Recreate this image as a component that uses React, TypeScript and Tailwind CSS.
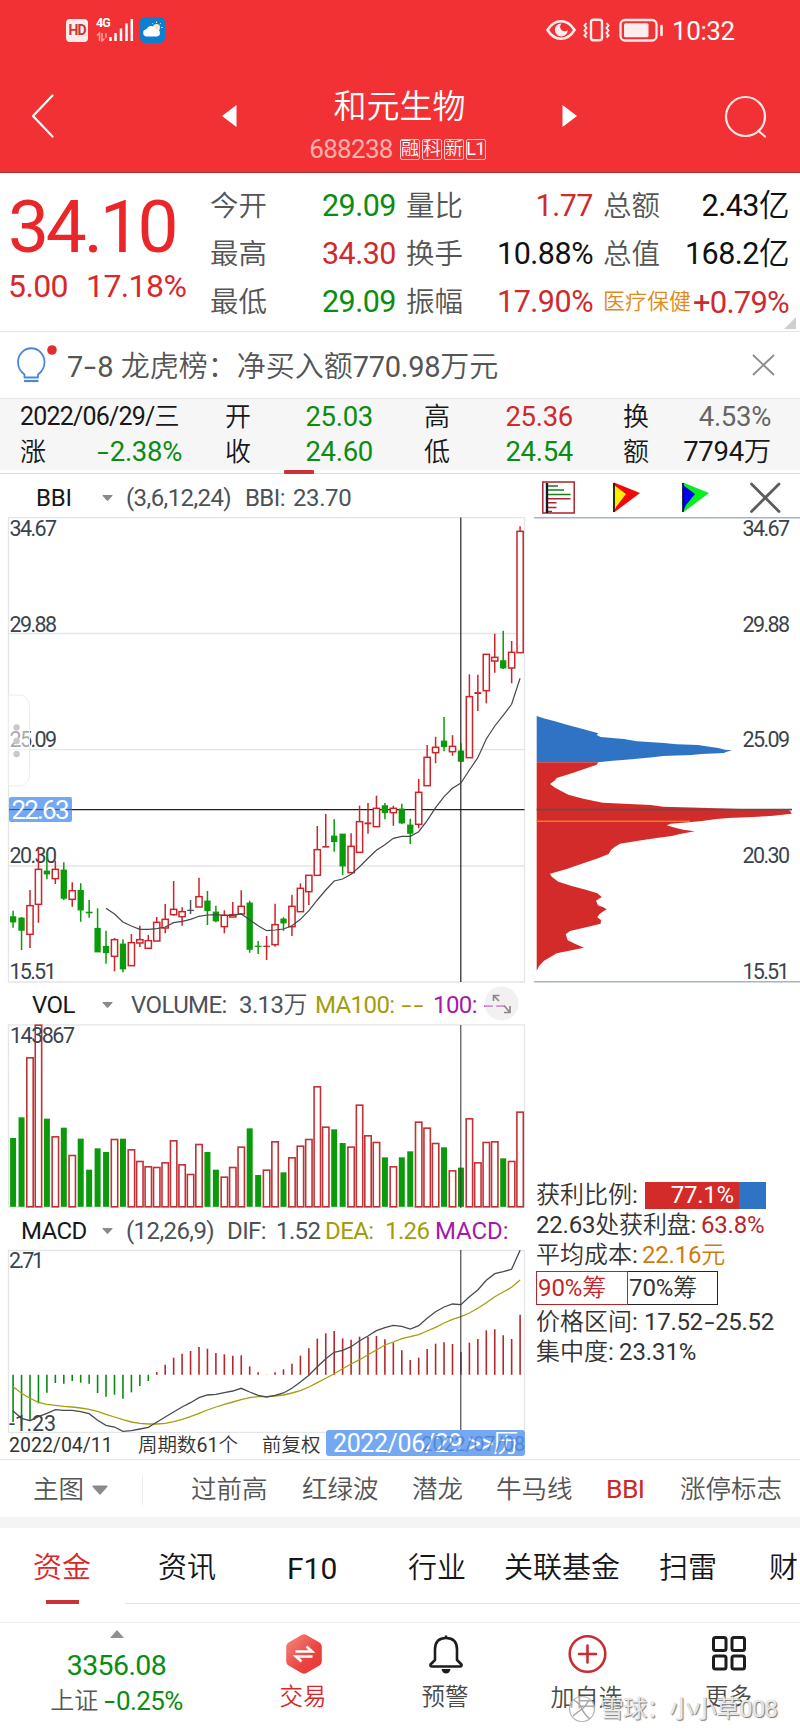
import React from "react";

type Candle = [kind: "r" | "g" | "d", high: number, top: number, bottom: number, low: number];

const candles: Candle[] = [
  ["g", 1322, 1341, 1355, 1373], ["g", 1341, 1345, 1380, 1440], ["r", 1260, 1307, 1393, 1434], ["r", 1130, 1198, 1303, 1358],
  ["g", 1148, 1204, 1211, 1228], ["r", 1172, 1198, 1226, 1242], ["g", 1177, 1201, 1284, 1290], ["r", 1237, 1262, 1288, 1310],
  ["g", 1240, 1262, 1319, 1355], ["g", 1290, 1326, 1329, 1343], ["g", 1315, 1376, 1445, 1445], ["g", 1382, 1430, 1447, 1481],
  ["r", 1404, 1409, 1459, 1504], ["g", 1408, 1423, 1496, 1507], ["r", 1392, 1418, 1487, 1487], ["r", 1367, 1409, 1419, 1431],
  ["r", 1395, 1412, 1435, 1435], ["r", 1341, 1357, 1413, 1413], ["r", 1302, 1348, 1374, 1390], ["r", 1233, 1318, 1334, 1337],
  ["r", 1312, 1325, 1340, 1367], ["d", 1290, 1320, 1322, 1332], ["r", 1223, 1280, 1311, 1311], ["g", 1263, 1294, 1321, 1365],
  ["g", 1307, 1327, 1352, 1357], ["r", 1321, 1336, 1370, 1390], ["r", 1296, 1334, 1341, 1341], ["r", 1261, 1309, 1332, 1332],
  ["g", 1292, 1300, 1437, 1448], ["g", 1413, 1428, 1430, 1452], ["r", 1398, 1428, 1430, 1470], ["r", 1301, 1364, 1424, 1430],
  ["g", 1342, 1348, 1358, 1382], ["r", 1274, 1309, 1370, 1398], ["r", 1240, 1255, 1325, 1325], ["r", 1216, 1216, 1265, 1305],
  ["r", 1068, 1139, 1216, 1216], ["r", 1032, 1129, 1132, 1132], ["g", 1048, 1099, 1114, 1145], ["g", 1093, 1093, 1187, 1215],
  ["r", 1090, 1129, 1208, 1208], ["r", 1007, 1055, 1147, 1147], ["r", 999, 1058, 1062, 1091], ["r", 977, 1015, 1070, 1070],
  ["g", 999, 1008, 1027, 1048], ["r", 1007, 1015, 1028, 1067], ["g", 1001, 1018, 1058, 1062], ["g", 1046, 1066, 1089, 1122],
  ["r", 927, 967, 1063, 1075], ["r", 825, 862, 947, 947], ["r", 800, 832, 848, 880], ["g", 741, 814, 829, 844],
  ["r", 796, 829, 845, 857], ["g", 820, 844, 873, 876], ["r", 613, 680, 863, 863], ["r", 614, 667, 671, 723],
  ["r", 553, 553, 662, 700], ["r", 491, 562, 573, 608], ["g", 482, 573, 593, 597], ["r", 513, 547, 594, 640],
  ["r", 169, 184, 548, 548],
];

const bbi = [
  1315, 1332, 1356, 1368, 1378, 1378, 1376, 1371, 1358, 1354, 1348, 1339, 1335, 1334, 1336, 1336, 1332, 1349, 1367, 1382, 1380, 1377,
  1367, 1348, 1322, 1290, 1260, 1233, 1227, 1213, 1190, 1165, 1141, 1124, 1105, 1099, 1099, 1085, 1052, 1013, 980, 955, 939, 900, 863,
  807, 768, 736, 703, 625,
];

const volumes = [
  474, 412, 232, 134, 416, 469, 443, 525, 476, 569, 505, 516, 477, 476, 508, 543, 559, 561, 547, 481, 553, 582, 492, 516, 569, 590, 561,
  500, 445, 585, 569, 484, 577, 532, 497, 477, 319, 440, 448, 489, 500, 374, 466, 486, 532, 559, 532, 514, 425, 443, 489, 502, 571, 563,
  415, 547, 486, 484, 535, 543, 395,
];

const hist = [
  636, 647, 632, 580, 548, 519, 521, 513, 518, 521, 549, 560, 554, 566, 547, 528, 513, 486, 464, 443, 431, 423, 411, 416, 429, 433, 437,
  436, 469, 487, 495, 487, 478, 461, 437, 415, 386, 370, 363, 385, 389, 380, 381, 378, 388, 398, 421, 450, 443, 417, 401, 397, 402, 426,
  398, 387, 361, 358, 376, 387, 314,
];

const dif = [
  603, 625, 632, 620, 610, 599, 601, 601, 605, 611, 631, 646, 651, 664, 662, 657, 652, 637, 621, 606, 591, 578, 563, 555, 553, 548, 543,
  535, 546, 556, 561, 556, 549, 535, 516, 496, 470, 446, 427, 421, 410, 392, 378, 362, 353, 346, 349, 357, 347, 325, 305, 291, 282, 284,
  260, 240, 211, 191, 185, 178, 121,
];

const dea = [
  530, 550, 565, 577, 583, 586, 589, 591, 594, 598, 604, 613, 621, 629, 636, 640, 642, 642, 640, 635, 628, 620, 610, 600, 591, 583, 576,
  569, 563, 560, 560, 558, 555, 549, 542, 531, 518, 505, 491, 476, 462, 449, 434, 420, 405, 396, 386, 380, 374, 363, 352, 339, 328, 320,
  309, 295, 278, 260, 246, 232, 210,
];

const cx = (i: number) => 13.1 + i * 8.45;
const price = (v: number) => v / 3 + 470;
const vol = (v: number) => v / 3 + 980;
const macd = (v: number) => v / 3 + 1210;
const line = (vals: number[], y: (v: number) => number, from = 0) =>
  vals.map((v, i) => `${cx(i + from).toFixed(1)},${y(v).toFixed(1)}`).join(" ");

const RED = "#cc2428";
const GREEN = "#0b9a0b";

function AxisLabel({ x, y, w, children }: { x: number; y: number; w: number; children: string }) {
  return (
    <text x={x} y={y} textLength={w} fontSize="21.5" fill="#3b444c">
      {children}
    </text>
  );
}

function Dash() {
  return <span className="mx-[3px] inline-block scale-x-150">-</span>;
}

function PriceChart() {
  return (
    <svg className="block" width="530" height="466" viewBox="0 517 530 466">
      <g stroke="#e4e5e6" strokeWidth="1.3" fill="none">
        <path d="M8.5 517.5H524.5V982H8.5Z" />
        <path d="M8.5 633.5H524.5M8.5 749.7H524.5M8.5 866H524.5" />
      </g>
      <AxisLabel x={9.5} y={535.5} w={47.5}>34.67</AxisLabel>
      <AxisLabel x={9.5} y={632} w={47.5}>29.88</AxisLabel>
      <AxisLabel x={9.5} y={747} w={47.5}>25.09</AxisLabel>
      <AxisLabel x={9.5} y={863} w={47.5}>20.30</AxisLabel>
      <AxisLabel x={9.5} y={978.5} w={47}>15.51</AxisLabel>
      <path d="M8.5 695H18Q29.5 695 29.5 707V774Q29.5 786 18 786H8.5" fill="#fff" fillOpacity=".55" stroke="#ededed" />
      <g fill="#c9c9c9">
        <circle cx="16.6" cy="727.4" r="3.2" />
        <circle cx="16.6" cy="741" r="3.2" />
        <circle cx="16.6" cy="754" r="3.2" />
      </g>
      <path d="M72 809.6H524.5M460.8 517.5V982" stroke="#222" strokeWidth="1.2" />
      {candles.map(([k, h, t, b, l], i) => {
        const x = cx(i);
        const c = k === "r" ? RED : k === "g" ? GREEN : "#4a5258";
        const thin = b - t < 6;
        return (
          <g key={i} stroke={c} strokeWidth="1.5">
            <path d={`M${x} ${price(h)}V${price(t)}M${x} ${price(b)}V${price(l)}`} />
            {thin ? (
              <path d={`M${x - 3.4} ${price((t + b) / 2)}h6.8`} strokeWidth={Math.max(1.2, (b - t) / 3 + 0.6)} />
            ) : (
              <rect x={x - (k === "r" ? 3.1 : 2.4)} y={price(t)} width={k === "r" ? 6.2 : 4.8} height={price(b) - price(t)} fill={k === "r" ? "#fff" : c} />
            )}
          </g>
        );
      })}
      <path d="M460.8 743V762" stroke="#222" strokeOpacity=".4" />
      <polyline points={line(bbi, price, 11)} fill="none" stroke="#45484c" strokeWidth="1.2" />
      <rect x="9" y="797" width="63" height="25" rx="2" fill="#74a8f3" />
      <path d="M9 809.6H72" stroke="#35507d" />
      <text x="11.5" y="819" textLength="58" fontSize="26" fill="#fff">22.63</text>
    </svg>
  );
}

function VolumeChart() {
  return (
    <svg className="block" width="530" height="184" viewBox="0 1024 530 184">
      <path d="M8.5 1024.8H524.5V1207H8.5Z" stroke="#e4e5e6" strokeWidth="1.3" fill="none" />
      {volumes.map((v, i) => {
        const red = candles[i][0] !== "g";
        return (
          <rect
            key={i}
            x={cx(i) - (red ? 3.2 : 3)}
            y={vol(v) + (red ? 0.5 : 0)}
            width={red ? 6.4 : 6}
            height={1206.8 - vol(v) - (red ? 0.5 : 0)}
            fill={red ? "#fff" : GREEN}
            stroke={red ? "#c13236" : "none"}
            strokeWidth="1.6"
          />
        );
      })}
      <path d="M460.8 1025V1208" stroke="#3a4046" strokeWidth="1.1" />
      <AxisLabel x={10} y={1043} w={65}>143867</AxisLabel>
    </svg>
  );
}

function MacdChart() {
  return (
    <svg className="block overflow-visible" width="530" height="183" viewBox="0 1250 530 183">
      <path d="M8.5 1250.5H524.5V1432.3H8.5Z" stroke="#e4e5e6" strokeWidth="1.3" fill="none" />
      {hist.map((v, i) => (
        <path key={i} d={`M${cx(i)} 1374.8V${macd(v)}`} stroke={i < 17 ? "#0a8a14" : "#b5282d"} strokeWidth="1.6" />
      ))}
      <polyline points={line(dea, macd)} fill="none" stroke="#a3a00c" strokeWidth="1.3" />
      <polyline points={line(dif, macd)} fill="none" stroke="#474a52" strokeWidth="1.3" />
      <path d="M460.8 1250V1432" stroke="#33383e" strokeWidth="1.1" />
      <AxisLabel x={9} y={1268} w={35}>2.71</AxisLabel>
      <AxisLabel x={9} y={1430.5} w={47}>-1.23</AxisLabel>
    </svg>
  );
}

const blueArea: [number, number][] = [
  [50, 738], [70, 745], [105, 754], [135, 763], [180, 775], [213, 784], [235, 790], [230, 795], [242, 801], [312, 807], [350, 814],
  [432, 819], [470, 823], [535, 825], [558, 829], [595, 834], [615, 839], [636, 841], [618, 846], [612, 849], [545, 852], [514, 855],
  [430, 858], [398, 862], [335, 868], [270, 873], [235, 877], [50, 877],
];
const redArea: [number, number][] = [
  [50, 877], [235, 877], [230, 884], [195, 896], [160, 908], [110, 924], [105, 931], [90, 942], [105, 953], [145, 974], [190, 986],
  [248, 998], [392, 1005], [430, 1010], [540, 1013], [660, 1017], [806, 1020], [812, 1025], [815, 1031], [760, 1037], [715, 1040],
  [625, 1044], [590, 1047], [545, 1053], [508, 1057], [452, 1061], [440, 1066], [460, 1072], [490, 1079], [524, 1084], [480, 1092],
  [455, 1098], [405, 1105], [350, 1113], [300, 1121], [285, 1130], [273, 1140], [266, 1152], [230, 1166], [190, 1180], [140, 1197],
  [90, 1211], [95, 1220], [115, 1235], [155, 1248], [200, 1260], [232, 1270], [245, 1281], [228, 1292], [234, 1306], [250, 1312],
  [260, 1318], [248, 1325], [238, 1333], [232, 1342], [243, 1350], [242, 1361], [205, 1370], [150, 1383], [137, 1393], [143, 1411],
  [165, 1421], [192, 1433], [155, 1441], [110, 1450], [90, 1462], [72, 1472], [58, 1487], [50, 1502],
];
const area = (p: [number, number][]) => p.map(([x, y]) => `${(x / 3 + 520).toFixed(1)},${(y / 3 + 470).toFixed(1)}`).join(" ");

function ChipChart() {
  return (
    <svg className="block" width="270" height="466" viewBox="530 517 270 466">
      <path d="M534 517.8H800M534 981.8H800" stroke="#a5b4c6" strokeWidth="1.4" />
      <polygon points={area(blueArea)} fill="#2f74c4" />
      <polygon points={area(redArea)} fill="#d32b29" />
      <path d="M536.7 809.6H792" stroke="#6a4a4a" strokeWidth="1.8" />
      <path d="M536.7 821.2H690" stroke="#f07a1c" strokeWidth="1.5" />
      <AxisLabel x={742.5} y={535.5} w={47.5}>34.67</AxisLabel>
      <AxisLabel x={742.5} y={632} w={47.5}>29.88</AxisLabel>
      <AxisLabel x={742.5} y={747} w={47.5}>25.09</AxisLabel>
      <AxisLabel x={742.5} y={863} w={47.5}>20.30</AxisLabel>
      <AxisLabel x={742.5} y={978.5} w={47}>15.51</AxisLabel>
    </svg>
  );
}

function ChipIcons() {
  return (
    <svg className="block" width="270" height="43" viewBox="530 474 270 43">
      <rect x="542.8" y="482" width="31.4" height="31" fill="#fff" stroke="#a8252d" strokeWidth="1.5" />
      <path d="M547 483V513" stroke="#16162e" strokeWidth="2.4" />
      <path d="M548 486H558M548 490H564M548 494.5H570.5" stroke="#1a7a1e" strokeWidth="1.6" />
      <path d="M548 498.7H570.5M548 502.7H556.5M548 507.5H556.5M548 511.5H552" stroke="#a8252d" strokeWidth="1.6" />
      <path d="M614 482.5V512.5L640 493Z" fill="#f20606" />
      <path d="M614 485L626 494L616 507L614 512Z" fill="#ffee00" />
      <path d="M614 483V512" stroke="#141414" strokeWidth="1.8" />
      <path d="M683 482.5V512.5L709 493Z" fill="#07ef22" />
      <path d="M683 485L695 494L686 505L683 512Z" fill="#0000f2" />
      <path d="M683 483V512" stroke="#10103a" strokeWidth="1.8" />
      <path d="M751.5 484L779 511.5M779 484L751.5 511.5" stroke="#5c5c5c" strokeWidth="2.8" strokeLinecap="round" />
    </svg>
  );
}

function Down({ className }: { className: string }) {
  return (
    <svg className={className} viewBox="0 0 16 9">
      <path d="M1.2 0H14.8Q16.4 0 15.2 1.4L9 8.4Q8 9.4 7 8.4L.8 1.4Q-.4 0 1.2 0Z" fill="#8a8a8a" />
    </svg>
  );
}

function StatusBar() {
  return (
    <div className="flex h-[60px] items-center justify-between pl-[66px] pr-[66px] text-white">
      <div className="flex items-center">
        <div className="flex h-[23px] w-[22px] items-center justify-center rounded-[4px] bg-[#ffeaea] text-[14px] font-bold leading-none tracking-[-1px] text-[#c8363a]">HD</div>
        <div className="relative ml-[8px] h-[24px] w-[38px]">
          <span className="absolute left-0 top-[-1px] text-[12.5px] font-bold leading-none tracking-[-1px]">4G</span>
          <svg className="absolute inset-0" width="38" height="24" viewBox="0 0 38 24">
            <path d="M1 17.5L3.5 15V23M6 15V23L8.5 20.5M10 15V20" stroke="#ff9d9d" strokeWidth="1.5" fill="none" />
            <path d="M14.5 19V23M19.5 15V23M25 10.5V23M30.5 5.5V23M35.8 1V23" stroke="#fff" strokeWidth="2.5" />
          </svg>
        </div>
        <svg className="ml-[6px]" width="25" height="26" viewBox="0 0 25 26">
          <rect width="25" height="26" rx="5" fill="#0c7fd0" />
          <circle cx="16.5" cy="10.5" r="3.5" fill="#ffe9b8" />
          <path d="M16.5 4.5V6M20.8 6.2L19.8 7.2M22.6 10.5H21.2M12.3 6.2L13.3 7.2" stroke="#ffe9b8" strokeWidth="1" />
          <path d="M7 19.5a3.6 3.6 0 0 1-.4-7.2 4.8 4.8 0 0 1 9-.3 3.8 3.8 0 0 1 1.2 7.5Z" fill="#fff" />
        </svg>
      </div>
      <div className="flex items-center">
        <svg width="118" height="26" viewBox="0 0 118 26" fill="none" stroke="#ffecec">
          <path d="M1.5 13Q7 4.2 15 4.2T28.5 13Q23 21.8 15 21.8T1.5 13Z" strokeWidth="2.6" />
          <path d="M15.5 6.5a6.5 6.5 0 1 0 6.3 6.5 4 4 0 0 1-6.3-6.5Z" fill="#ffecec" stroke="none" />
          <rect x="45" y="2.8" width="11" height="20.5" rx="2.5" strokeWidth="2.4" />
          <path d="M40.500 6L38.500 8.500L40.500 11L38.500 13.500L40.500 16L38.500 18.500L40.500 20.500M60.500 6L62.500 8.500L60.500 11L62.500 13.500L60.500 16L62.500 18.500L60.500 20.500" strokeWidth="2" />
          <rect x="74.5" y="3" width="36" height="20.5" rx="4.5" strokeWidth="2.3" />
          <rect x="78" y="6.3" width="24.5" height="14" rx="1.5" fill="#ffecec" stroke="none" />
          <path d="M115.5 9V18" strokeWidth="2.6" strokeLinecap="round" />
        </svg>
        <span className="ml-[8px] w-[62px] pt-[2px] text-[26px] leading-none tracking-[-0.4px]">10:32</span>
      </div>
    </div>
  );
}

function Badge({ children }: { children: string }) {
  return (
    <span className="flex h-[21px] w-[20px] items-center justify-center rounded-[2px] border border-[#ffc9c9] text-[18px] leading-none tracking-[-0.500px] text-white">{children}</span>
  );
}

function Header() {
  return (
    <header className="h-[173px] border-b border-[#a8302c] bg-[#f13133]">
      <StatusBar />
      <div className="flex h-[112px] items-center pl-[31px] pr-[33px]">
        <svg width="23" height="44" viewBox="0 0 23 44" fill="none"><path d="M21.5 1.5L2 22L21.5 42.5" stroke="#fff" strokeWidth="2.2" strokeLinecap="round" strokeLinejoin="round" /></svg>
        <svg className="ml-[168px]" width="15" height="22" viewBox="0 0 15 22"><path d="M14.5 0V22L0 11Z" fill="#fff" /></svg>
        <div className="flex flex-1 flex-col items-center">
          <h1 className="mt-[17px] text-[33px] leading-[36px] text-white">和元生物</h1>
          <div className="mr-[4px] mt-[13px] flex items-center gap-[2px]">
            <span className="mr-[5px] text-[26px] leading-[22px] tracking-[-0.700px] text-[#ffb1ae]">688238</span>
            <Badge>融</Badge>
            <Badge>科</Badge>
            <Badge>新</Badge>
            <Badge>L1</Badge>
          </div>
        </div>
        <svg className="mr-[147px]" width="15" height="22" viewBox="0 0 15 22"><path d="M.5 0V22L15 11Z" fill="#fff" /></svg>
        <svg width="43" height="43" viewBox="0 0 43 43" fill="none" stroke="#ffe9e9" strokeWidth="2.2" strokeLinecap="round"><circle cx="21.5" cy="21.5" r="19.5" /><path d="M34.5 36L41 41.5" /></svg>
      </div>
    </header>
  );
}

function Quote() {
  const label = "ml-[-1px] pt-[2px] text-[28.500px] text-[#555]";
  const value = "pt-[1px] text-right text-[30.500px] tracking-[-0.500px]";
  return (
    <section className="relative flex h-[159px] whitespace-nowrap border-b border-[#e6e6e6] leading-none">
      <div className="w-[211px] pl-[8px] text-[#ea262b]">
        <div className="mt-[16px] text-[73px] leading-[76px] tracking-[-3.200px]">34.10</div>
        <div className="mt-[4px] flex text-[32px] leading-[34px] tracking-[-0.600px] text-[#d9282c]">
          <span className="w-[78px]">5.00</span>
          <span>17.18%</span>
        </div>
      </div>
      <div className="grid h-[144px] w-[578px] grid-cols-[58px_127px_11px_58px_128px_11px_58px_127px] grid-rows-[48px_48px_48px] items-center pt-[9px]">
        <span className={label}>今开</span><span className={value + " text-[#0b8c12]"}>29.09</span><i />
        <span className={label}>量比</span><span className={value + " text-[#cf2a2e]"}>1.77</span><i />
        <span className={label}>总额</span><span className={value + " text-[#111]"}>2.43亿</span>
        <span className={label}>最高</span><span className={value + " text-[#cf2a2e]"}>34.30</span><i />
        <span className={label}>换手</span><span className={value + " text-[#111]"}>10.88%</span><i />
        <span className={label}>总值</span><span className={value + " text-[#111]"}>168.2亿</span>
        <span className={label}>最低</span><span className={value + " text-[#0b8c12]"}>29.09</span><i />
        <span className={label}>振幅</span><span className={value + " text-[#cf2a2e]"}>17.90%</span><i />
        <div className="col-span-2 flex items-center justify-between">
          <span className="ml-[-1px] text-[22px] text-[#dd8a1c]">医疗保健</span>
          <span className="pt-[1px] text-[31px] tracking-[-0.800px] text-[#cf2a2e]">+0.79%</span>
        </div>
      </div>
      <svg className="absolute bottom-[2px] right-[4px]" width="12" height="12"><path d="M12 0V12H0Z" fill="#cfcfcf" /></svg>
    </section>
  );
}

function Notice() {
  return (
    <section className="flex h-[67px] items-center whitespace-nowrap border-b border-[#e6e6e6] pl-[16px] pr-[25px]">
      <svg width="42" height="40" viewBox="0 0 42 40" fill="none" stroke="#4a86e0" strokeWidth="1.8" strokeLinejoin="round">
        <path d="M8.500 32.500V29.500C5 27 2 23 2 17A13 13.500 0 0 1 28.500 17C28.500 23 25.500 27 22 29.500V32.500Z" />
        <path d="M8 36H22.500" strokeWidth="2.200" />
        <circle cx="36" cy="5" r="4.800" fill="#e12d30" stroke="none" />
      </svg>
      <span className="ml-[9px] pt-[4px] text-[29px] leading-none text-[#555]">7<Dash />8 龙虎榜：净买入额<span className="tracking-[-0.300px]">770.98</span>万元</span>
      <svg className="ml-auto" width="23" height="22" viewBox="0 0 23 22"><path d="M1 1L22 21M22 1L1 21" stroke="#8d8d8d" strokeWidth="1.9" /></svg>
    </section>
  );
}

function DayStats() {
  const k = "text-[26px] text-[#181818]";
  const v = "text-right text-[27.500px] tracking-[-0.300px]";
  return (
    <section className="relative flex h-[75px] flex-col border-b border-[#dcdcdc] bg-white">
      <div className="grid h-[71px] grid-cols-[26px_136px_43px_26px_122px_51px_26px_123px_50px_26px_122px] grid-rows-[35px_35px] items-center whitespace-nowrap bg-[#f6f6f6] pl-[20px] leading-none">
        <span className="col-span-2 text-[25px] tracking-[-0.800px] text-[#181818]">2022/06/29/三</span><i />
        <span className={k}>开</span><span className={v + " text-[#0b8c12]"}>25.03</span><i />
        <span className={k}>高</span><span className={v + " text-[#cf2a2e]"}>25.36</span><i />
        <span className={k}>换</span><span className={v + " text-[#666]"}>4.53%</span>
        <span className={k}>涨</span><span className={v + " text-[#0b8c12]"}><Dash />2.38%</span><i />
        <span className={k}>收</span><span className={v + " text-[#0b8c12]"}>24.60</span><i />
        <span className={k}>低</span><span className={v + " text-[#0b8c12]"}>24.54</span><i />
        <span className={k}>额</span><span className={v + " text-[#181818]"}>7794万</span>
      </div>
      <div className="absolute bottom-[-1px] left-[284px] h-[4px] w-[30px] rounded-[1px] bg-[#c93236]" />
    </section>
  );
}

function Charts() {
  return (
    <section className="flex h-[986px] border-b border-[#e6e6e6]">
      <div className="w-[530px] whitespace-nowrap text-[24px] leading-none text-[#4c5257]">
        <div className="flex h-[43px] items-center pt-[4px] tracking-[-0.600px]">
          <span className="w-[102px] pl-[36px] tracking-[-0.200px] text-[#181818]">BBI</span>
          <Down className="h-[6px] w-[11px]" />
          <span className="ml-[13px] w-[119px]">(3,6,12,24)</span>
          <span className="w-[48px]">BBI:</span>
          <span className="tracking-[-0.400px]">23.70</span>
        </div>
        <PriceChart />
        <div className="relative flex h-[41px] items-center pt-[2px] tracking-[-0.600px]">
          <span className="w-[102px] pl-[32px] text-[#181818]">VOL</span>
          <Down className="h-[6px] w-[11px]" />
          <span className="ml-[18px] w-[108px]">VOLUME:</span>
          <span className="w-[76px]">3.13万</span>
          <span className="w-[118px] text-[#a29d0c]">MA100: <Dash /><Dash /></span>
          <span className="text-[#a41aa8]">100: <Dash /><Dash /></span>
          <svg className="absolute left-[484px] top-[3px]" width="35" height="35" viewBox="0 0 35 35">
            <circle cx="17.500" cy="17.500" r="17" fill="#ebe6ea" fillOpacity=".6" />
            <path d="M9.500 15V9.500H15.500M9.500 9.500L15 15M20 19.500L26 26.500M26 20V26.500H20" fill="none" stroke="#8b858a" strokeWidth="1.600" />
          </svg>
        </div>
        <VolumeChart />
        <div className="flex h-[42px] items-center pt-[3px] tracking-[-0.600px]">
          <span className="w-[102px] pl-[21px] text-[#181818]">MACD</span>
          <Down className="h-[6px] w-[11px]" />
          <span className="ml-[13px] w-[101px]">(12,26,9)</span>
          <span className="w-[49px]">DIF:</span>
          <span className="w-[49px]">1.52</span>
          <span className="w-[60px] text-[#a29d0c]">DEA:</span>
          <span className="w-[50px] text-[#a29d0c]">1.26</span>
          <span className="tracking-[-0.100px] text-[#a41aa8]">MACD:</span>
        </div>
        <MacdChart />
        <div className="relative flex h-[26px] items-center text-[19.500px] text-[#333]">
          <span className="w-[129px] pl-[9px]">2022/04/11</span>
          <span className="ml-[9px] w-[124px]">周期数61个</span>
          <span>前复权</span>
          <div className="absolute left-[326px] top-[-3px] flex h-[26px] w-[199px] items-center rounded-[3px] bg-[#74a8f3] pl-[7px] pt-[1px] text-[25px] tracking-[-0.400px] text-white">
            2022/06/29 &gt;&gt;历
            <span className="absolute right-0 top-[4px] text-[20px] tracking-[-0.300px] text-[#3f78c8]/70">2022/07/08</span>
          </div>
        </div>
      </div>
      <div className="w-[270px] whitespace-nowrap text-[24px] leading-none text-[#333]">
        <ChipIcons />
        <ChipChart />
        <div className="flex flex-col pl-[6px] pt-[197px]">
          <div className="flex h-[30px] items-center">
            <span className="w-[109px]">获利比例:</span>
            <div className="flex h-[27px] w-[121px] items-center bg-[#2f74c4]">
              <div className="flex h-full w-[94px] items-center justify-end bg-[#d32b29] pr-[5px] tracking-[-0.200px] text-white">77.1%</div>
            </div>
          </div>
          <div className="flex h-[30px] items-center tracking-[-0.200px]">
            <span className="w-[165px]">22.63处获利盘:</span>
            <span className="text-[#b5262a]">63.8%</span>
          </div>
          <div className="flex h-[30px] items-center">
            <span className="w-[106px]">平均成本:</span>
            <span className="tracking-[-0.200px] text-[#cc7d10]">22.16元</span>
          </div>
          <div className="flex h-[36px] items-center tracking-[-0.100px]">
            <div className="flex h-[34px] w-[92px] items-center border-[1.500px] border-[#b5262a] pl-[1px] text-[#c5262a]">90%筹</div>
            <div className="flex h-[34px] w-[90px] items-center border-[1.500px] border-l-0 border-[#222] pl-[1px]">70%筹</div>
          </div>
          <div className="flex h-[31px] items-center">
            <span className="w-[108px]">价格区间:</span>
            <span className="tracking-[-0.300px]">17.52<Dash />25.52</span>
          </div>
          <div className="flex h-[30px] items-center">
            <span className="w-[83px]">集中度:</span>
            <span className="tracking-[-0.100px]">23.31%</span>
          </div>
        </div>
      </div>
    </section>
  );
}

function IndicatorTabs() {
  return (
    <nav className="flex h-[57px] items-center whitespace-nowrap pl-[33px] pt-[2px] text-[25.500px] leading-none text-[#555]">
      <span className="w-[59px]">主图</span>
      <Down className="h-[10px] w-[16px]" />
      <span className="ml-[34px] h-[30px] w-[49px] border-l border-[#ececec]" />
      <span className="w-[111px]">过前高</span>
      <span className="w-[110px]">红绿波</span>
      <span className="w-[84px]">潜龙</span>
      <span className="w-[110px]">牛马线</span>
      <span className="w-[74px] text-[26.500px] tracking-[-0.600px] text-[#c9282c]">BBI</span>
      <span>涨停标志</span>
    </nav>
  );
}

function InfoTabs() {
  return (
    <nav className="relative flex h-[76px] items-center overflow-hidden whitespace-nowrap pl-[33px] pt-[5px] text-[29px] leading-none text-[#161616]">
      <span className="w-[125px] text-[#d9282c]">资金</span>
      <span className="w-[129px]">资讯</span>
      <span className="w-[121px] text-[30px]">F10</span>
      <span className="w-[96px]">行业</span>
      <span className="w-[155px]">关联基金</span>
      <span className="w-[110px]">扫雷</span>
      <span>财</span>
      <i className="absolute bottom-0 left-[125px] right-0 h-[1.500px] bg-[#e2e2e2]" />
      <i className="absolute bottom-0 left-[46px] h-[4px] w-[33px] bg-[#c93236]" />
    </nav>
  );
}

function BottomBar() {
  const item = "flex flex-col items-center text-[23.500px] leading-none";
  return (
    <footer className="relative mt-[18px] h-[111px] whitespace-nowrap border-t border-[#ececec]">
      <div className="grid grid-cols-[233px_140px_144px_142px_141px] pt-[7px]">
        <div className="flex flex-col items-center leading-none">
          <svg width="14" height="8" viewBox="0 0 14 8"><path d="M7 0L14 8H0Z" fill="#8f8f8f" /></svg>
          <span className="mt-[14px] text-[28.500px] tracking-[-0.600px] text-[#0b8c12]">3356.08</span>
          <span className="mt-[7px] flex items-center gap-[5px] text-[24px] text-[#555]">上证<span className="text-[26px] tracking-[-0.600px] text-[#0b8c12]"><Dash />0.25%</span></span>
        </div>
        <div className={item + " pt-[4px] text-[#d9282c]"}>
          <svg className="ml-[1px]" width="36" height="40" viewBox="0 0 36 40">
            <defs><linearGradient id="hex" x1="0" y1="0" x2="1" y2="1"><stop offset="0" stopColor="#f58a80" /><stop offset=".6" stopColor="#ea4440" /><stop offset="1" stopColor="#ea3634" /></linearGradient></defs>
            <path d="M15.500 1Q18-.5 20.500 1L33.500 8.500Q35.800 10 35.800 12.500V27.500Q35.800 30 33.500 31.500L20.500 39Q18 40.500 15.500 39L2.500 31.500Q.2 30 .2 27.500V12.500Q.2 10 2.500 8.500Z" fill="url(#hex)" />
            <path d="M9.500 17.500H26L20.500 12.500M26.500 22.500H10L15.500 27.500" fill="none" stroke="#fff" strokeWidth="2.600" />
          </svg>
          <span className="mt-[12px]">交易</span>
        </div>
        <div className={item + " pt-[4px] text-[#4a4a4a]"}>
          <svg className="ml-[1px]" width="36" height="40" viewBox="0 0 36 40" fill="none" stroke="#1d1d1d" strokeWidth="2.600" strokeLinejoin="round">
            <path d="M18 1.500V4M7 26V15.500Q7 4 18 4T29 15.500V26L33.500 30.500Q34 32.500 32 32.500H4Q2 32.500 2.500 30.500Z" />
            <path d="M13.500 35H22.500Q21.500 39.500 18 39.500T13.500 35Z" fill="#1d1d1d" stroke="none" />
          </svg>
          <span className="mt-[12px]">预警</span>
        </div>
        <div className={item + " pt-[4px] text-[#4a4a4a]"}>
          <svg width="40" height="40" viewBox="0 0 40 40" fill="none" stroke="#cb2b31" strokeWidth="2.600" strokeLinecap="round">
            <circle cx="19.500" cy="20" r="17.800" /><path d="M11 20H28M19.500 11.500V28.500" />
          </svg>
          <span className="mr-[3px] mt-[12px] text-[24px]">加自选</span>
        </div>
        <div className={item + " pt-[4px] text-[#4a4a4a]"}>
          <svg width="40" height="40" viewBox="0 0 40 40" fill="none" stroke="#1d1d1d" strokeWidth="3">
            <rect x="3.500" y="3.500" width="12.500" height="13" rx="2" /><rect x="22" y="3.500" width="12.500" height="13" rx="2" />
            <rect x="3.500" y="22" width="12.500" height="13" rx="2" /><rect x="22" y="22" width="12.500" height="13" rx="2" />
          </svg>
          <span className="mr-[2px] mt-[12px]">更多</span>
        </div>
      </div>
      <div className="absolute left-[568px] top-[72px] flex items-center text-[24px] leading-none tracking-[-0.800px] text-white/80 [text-shadow:1px_1px_1px_#777,0_0_1px_#aaa]">
        <svg width="28" height="28" viewBox="0 0 28 28" fill="none">
          <circle cx="14" cy="14" r="12.500" fill="#fff" fillOpacity=".55" stroke="#b5b5b5" strokeWidth="1.200" />
          <path d="M6 5Q12 9 14 14T22 24M21 5Q17 12 14 14T5 21" stroke="#a5a5a5" strokeWidth="1.500" />
        </svg>
        <span className="ml-[4px]">雪球：小小草008</span>
      </div>
    </footer>
  );
}

export default function App() {
  return (
    <main className="h-[1733px] w-[800px] overflow-hidden bg-white font-['Roboto','Noto_Sans_CJK_SC_DemiLight','Noto_Sans_CJK_SC',sans-serif] font-normal">
      <Header />
      <Quote />
      <Notice />
      <DayStats />
      <Charts />
      <IndicatorTabs />
      <div className="h-[11px] bg-[#f4f4f4]" />
      <InfoTabs />
      <BottomBar />
    </main>
  );
}
